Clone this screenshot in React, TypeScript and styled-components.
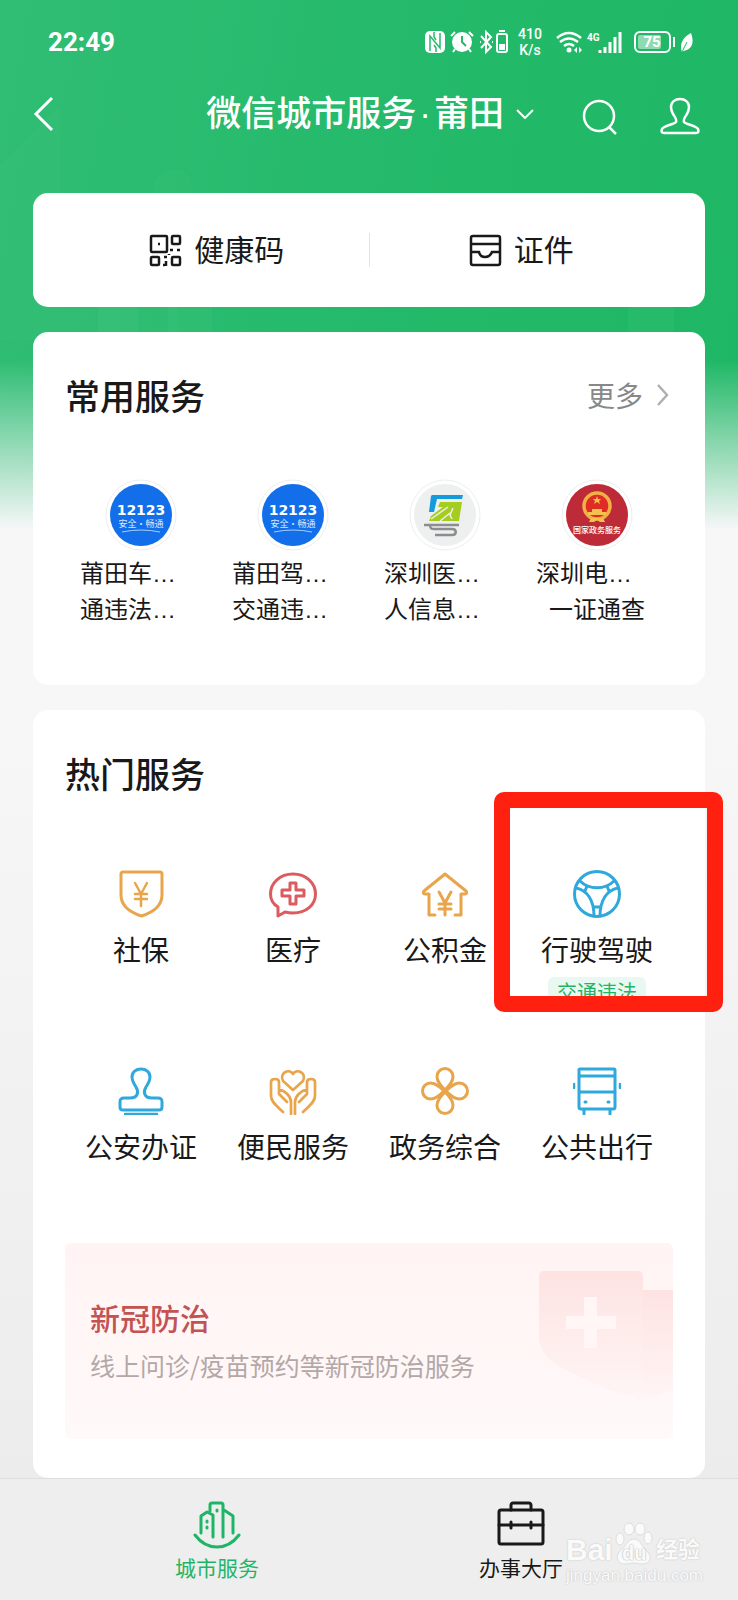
import React from "react";
import styled, { createGlobalStyle } from "styled-components";

const Global = createGlobalStyle`
  *, *::before, *::after { box-sizing: border-box; }
  body {
    margin: 0;
    background: #f1f1f2;
    color: #191919;
    font-family: "Noto Sans CJK SC", sans-serif;
  }
  button, a { font: inherit; color: inherit; text-decoration: none; }
  button { border: 0; padding: 0; background: none; cursor: pointer; }
  svg { display: block; flex: none; }
  h1, h2, h3, p { margin: 0; font-weight: 500; }
`;

const Page = styled.div`
  position: relative;
  display: flex;
  flex-direction: column;
  min-height: 100vh;
  background: linear-gradient(180deg, transparent 0, transparent 360px, #f7f7f8 530px, #f7f7f8 700px, #ececec 1478px),
    linear-gradient(100deg, #30bd74 0%, #22b969 50%, #1cb663 100%);
`;

const Skyline = styled.svg`
  position: absolute;
  left: 0;
  top: 0;
`;

const Header = styled.header`
  position: relative;
  color: #fff;
`;

const StatusBar = styled.div`
  display: flex;
  align-items: center;
  justify-content: space-between;
  height: 84px;
  padding: 0 44px 0 48px;
`;

const Clock = styled.time`
  font: 700 26px/32px Roboto, sans-serif;
`;

const Indicators = styled.div`
  display: flex;
  align-items: center;
  gap: 5px;
`;

const NetSpeed = styled.div`
  display: flex;
  flex-direction: column;
  width: 32px;
  font: 500 14px/16px Roboto, sans-serif;
  text-align: center;
`;

const NavBar = styled.nav`
  display: flex;
  align-items: center;
  height: 60px;
  padding: 0 38px 0 32px;
`;

const CityButton = styled.button`
  display: flex;
  align-items: center;
  gap: 12px;
  margin-left: auto;
`;

const Title = styled.h1`
  padding-bottom: 4px;
  font-size: 35px;
  line-height: 48px;
`;

const Dot = styled.span`
  margin: 0 3px;
  font-family: "Liberation Sans", sans-serif;
`;

const NavActions = styled.div`
  display: flex;
  align-items: center;
  gap: 42px;
  margin-left: 48px;
  padding-top: 4px;
`;

const Main = styled.main`
  position: relative;
  display: flex;
  flex-direction: column;
  flex: 1;
  gap: 25px;
  padding: 49px 33px 0;
`;

const Card = styled.section`
  padding: 0 32px;
  border-radius: 15px;
  background: #fff;
`;

const QuickCard = styled(Card)`
  display: flex;
  align-items: center;
  height: 114px;
`;

const QuickLink = styled.a`
  display: flex;
  flex: 1;
  align-items: center;
  justify-content: center;
  gap: 12px;
  font-size: 30px;
  line-height: 44px;
`;

const QuickText = styled.span`
  padding-bottom: 4px;
`;

const Divider = styled.span`
  width: 1px;
  height: 34px;
  background: #e4e4e4;
`;

const CardHead = styled.div`
  display: flex;
  align-items: center;
  justify-content: space-between;
  height: 126px;
`;

const Heading = styled.h2`
  font-size: 35px;
  line-height: 50px;
`;

const More = styled.a`
  display: flex;
  align-items: center;
  gap: 14px;
  padding-right: 4px;
  color: #888;
  font-size: 28px;
  line-height: 40px;
`;

const Grid = styled.div<{ $row: number }>`
  display: grid;
  grid-template-columns: repeat(4, 1fr);
  grid-auto-rows: ${(p) => p.$row}px;
`;

const FavoriteLink = styled.a`
  display: flex;
  flex-direction: column;
  align-items: center;
  padding-top: 21px;
`;

const FavoriteText = styled.span`
  display: flex;
  flex-direction: column;
  width: 122px;
  margin-top: 4px;
  font-size: 24px;
  line-height: 34px;
`;

const Line = styled.span<{ $center?: boolean }>`
  text-align: ${(p) => (p.$center ? "center" : "left")};
  white-space: nowrap;
`;

const Ellipsis = styled.span`
  font-family: "Liberation Sans", sans-serif;
`;

const ServiceLink = styled.a`
  position: relative;
  display: flex;
  flex-direction: column;
  align-items: center;
  gap: 11px;
  padding-top: 34px;
  font-size: 28px;
  line-height: 40px;
  white-space: nowrap;
`;

const Tag = styled.span`
  position: absolute;
  top: 141px;
  padding: 0 9px;
  border-radius: 6px;
  background: #e9f8f0;
  color: #1fb567;
  font-size: 20px;
  line-height: 30px;
`;

const Highlight = styled.span`
  position: absolute;
  top: -44px;
  right: -50px;
  left: -27px;
  height: 220px;
  border: 16px solid #ff2010;
  border-radius: 10px;
  pointer-events: none;
`;

const HotCard = styled(Card)`
  flex: 1;
  padding-bottom: 38px;
`;

const Banner = styled.a`
  position: relative;
  display: flex;
  flex-direction: column;
  justify-content: center;
  gap: 4px;
  height: 196px;
  margin-top: 13px;
  padding: 0 25px;
  overflow: hidden;
  border-radius: 6px;
  background: linear-gradient(180deg, #fff4f3, #fff9f9);
`;

const BannerArt = styled.svg`
  position: absolute;
  top: 27px;
  right: 0;
`;

const BannerTitle = styled.h3`
  color: #c25352;
  font-size: 30px;
  line-height: 44px;
`;

const BannerText = styled.p`
  color: #b3a8a8;
  font-size: 25px;
  font-weight: 400;
  line-height: 44px;
`;

const TabBar = styled.nav`
  position: relative;
  display: grid;
  grid-template-columns: repeat(2, 1fr);
  height: 122px;
  padding: 0 65px;
  border-top: 1px solid #dedede;
  background: #eee;
`;

const Tab = styled.a<{ $active?: boolean }>`
  display: flex;
  flex-direction: column;
  align-items: center;
  gap: 3px;
  padding-top: 22px;
  color: ${(p) => (p.$active ? "#1fb567" : "#191919")};
  font-size: 21px;
  line-height: 30px;
`;

const Watermark = styled.div`
  position: absolute;
  right: 38px;
  bottom: 14px;
  display: flex;
  flex-direction: column;
  width: 134px;
  color: #fafafa;
  font-family: "Liberation Sans", "Noto Sans CJK SC", sans-serif;
  text-shadow: 0 0 2px #ccc, 0 0 1px #ccc;
`;

const WatermarkLogo = styled.div`
  display: flex;
  align-items: flex-end;
  justify-content: space-between;
  font-size: 30px;
  font-weight: 700;
  line-height: 32px;
`;

const WatermarkCn = styled.span`
  font-size: 22px;
`;

const Paw = styled.span`
  position: relative;
  display: flex;
  justify-content: center;
  width: 38px;
  height: 44px;
`;

const PawText = styled.span`
  position: absolute;
  bottom: 2px;
  font-size: 20px;
  line-height: 22px;
  text-shadow: 0 0 2px #bbb, 0 0 1px #bbb;
`;

const WatermarkUrl = styled.span`
  font-size: 17px;
  line-height: 20px;
`;

const BLUE = "#2fa8dc";
const GOLD = "#e8a54c";

const LineIcon = ({ color, children, w = 3 }: { color: string; children: React.ReactNode; w?: number }) => (
  <svg width="48" height="48" viewBox="0 0 48 48" fill="none" stroke={color} strokeWidth={w} strokeLinecap="round" strokeLinejoin="round" aria-hidden="true">
    {children}
  </svg>
);

const ShieldIcon = () => (
  <LineIcon color={GOLD}>
    <path d="M6 2h37a2 2 0 0 1 2 2v21c0 10-8 17-20.500 21C12 42 4 35 4 25V4a2 2 0 0 1 2-2z" />
    <path d="M18 13l6 11 6-11M24 24v12M18 24h12M18 29h12" strokeWidth="2.500" />
  </LineIcon>
);
const MedicalIcon = () => (
  <LineIcon color="#dc5b5e">
    <path d="M9 37C4 34 1.500 29 1.500 24 1.500 13 11 4 24 4s22.500 9 22.500 20-9.500 19-22.500 19c-3 0-6-.5-8-1l-7 4z" />
    <path d="M21 13h6v7h8v6h-8v8h-6v-8h-8v-6h8z" />
  </LineIcon>
);
const HouseIcon = () => (
  <LineIcon color={GOLD}>
    <path d="M14 45H8V24H4c-2 0-2-2-1-3L24 4l21 17c1 1 1 3-1 3h-4v21h-6" />
    <path d="M18 22l6 11 6-11M24 33v12M18 34h12M18 39h12" />
  </LineIcon>
);
const WheelIcon = () => (
  <LineIcon color={BLUE}>
    <circle cx="24" cy="24" r="22.500" />
    <path d="M7 11c9 9 25 9 34 0M3 18c11 2 18 12 18 28M45 18c-11 2-18 12-18 28M14 16l-2 5M34 16l2 5M21 37h6" />
  </LineIcon>
);
const StampIcon = () => (
  <LineIcon color={BLUE}>
    <path d="M13 31c8 0 9-6 6-11-2-3-4-6-4-10 0-5 4-8 9-8s9 3 9 8c0 4-2 7-4 10-3 5-2 11 6 11h6c3 0 4 1 4 4v5c0 2-1 3-3 3H6c-2 0-3-1-3-3v-5c0-3 1-4 4-4z" />
    <path d="M8 47h32" strokeWidth="2.500" />
  </LineIcon>
);
const HandsIcon = () => (
  <LineIcon color={GOLD} w={2.7}>
    <path d="M24 23L14 14c-4-8 6-13 10-7 4-6 14-1 10 7z" />
    <path d="M22 47V35c0-6-6-11-12-13V15c0-4-8-4-8 0v14c0 6 6 10 12 16M10 22v5l8 8M26 47V35c0-6 6-11 12-13V15c0-4 8-4 8 0v14c0 6-6 10-12 16M38 22v5l-8 8" />
  </LineIcon>
);
const CloverIcon = () => (
  <LineIcon color={GOLD}>
    {[0, 90, 180, 270].map((a) => (
      <path key={a} transform={`rotate(${a} 24 24)`} d="M24 23c-4-4-8-8-8-13.500a8 8 0 0 1 16 0c0 5.500-4 9.500-8 13.500z" />
    ))}
  </LineIcon>
);
const BusIcon = () => (
  <LineIcon color={BLUE}>
    <path d="M7 2h34a1 1 0 0 1 1 1v37a2 2 0 0 1-2 2H8a2 2 0 0 1-2-2V3a1 1 0 0 1 1-1zM6 9h36M6 25h36M11 43v4M37 43v4M12 35h1M35 35h1" />
    <path d="M1 17v4M47 17v4" strokeWidth="2.500" />
  </LineIcon>
);

const CityIcon = () => (
  <LineIcon color="#1fb567">
    <path d="M2 34c12 16 32 16 44 0M8 32V15l6-4 6 3v22M17 10V4c0-2 1-2 2-2h9c2 0 2 1 2 2v32M31 9l9 6v17M14 20v1M14 26v1M24 9v1" />
  </LineIcon>
);
const CaseIcon = () => (
  <LineIcon color="#191919">
    <rect x="2" y="9" width="44" height="34" rx="2" />
    <path d="M14 9V4c0-1 1-2 2-2h16c1 0 2 1 2 2v5M2 24h44M14 21v6M34 21v6" />
  </LineIcon>
);

const TrafficLogo = () => (
  <svg width="72" height="72" viewBox="0 0 72 72" aria-hidden="true">
    <circle cx="36" cy="36" r="35" fill="#fff" stroke="#eee" />
    <circle cx="36" cy="36" r="31" fill="#126fe9" />
    <text x="36" y="36" textAnchor="middle" fill="#fff" fontFamily="DejaVu Sans" fontWeight="700" fontSize="14">12123</text>
    <text x="36" y="48" textAnchor="middle" fill="#d9e9ff" fontFamily="Noto Sans CJK SC" fontSize="9">安全·畅通</text>
    <path d="M17 53q19-4 38 0" fill="none" stroke="#a9cdfb" />
  </svg>
);
const MedicareLogo = () => (
  <svg width="72" height="72" viewBox="0 0 72 72" aria-hidden="true">
    <circle cx="36" cy="36" r="35" fill="#fff" stroke="#eee" />
    <circle cx="36" cy="36" r="31" fill="#eeefef" />
    <path d="M23 16h31l-1 4H28l-3 13h-5l2-16z" fill="#159bdc" />
    <path d="M31 23h22l-3 19H20l2-5 12-9h-5z" fill="#a5cd1f" />
    <path d="M21 42l16-12-4-2 12-2-3 9-3-3-12 10z" fill="#a5cd1f" />
    <path d="M22 40l17-12M44 29l-3 7 2 4M41 34l-10 8" fill="none" stroke="#eeefef" strokeWidth="1.500" />
    <path d="M15 46h35M21 46c0 3 1 4 4 4h18c5 0 5 6 0 6H26" fill="none" stroke="#8b8d8f" strokeWidth="2.500" />
  </svg>
);
const GovLogo = () => (
  <svg width="72" height="72" viewBox="0 0 72 72" aria-hidden="true">
    <circle cx="36" cy="36" r="35" fill="#fff" stroke="#eee" />
    <circle cx="36" cy="36" r="31" fill="#bd2b38" />
    <circle cx="36" cy="27" r="13" fill="#df2c24" stroke="#f0b045" strokeWidth="3.500" />
    <path d="M36 17l1 3h3l-2 2 1 3-3-2-3 2 1-3-2-2h3zM27 33h4v-3h10v3h4v3H27zM30 39h12l2 4h-5l-3-2-3 2h-5z" fill="#f5c04d" />
    <text x="36" y="54" textAnchor="middle" fill="#fff" fontFamily="Noto Sans CJK SC" fontWeight="500" fontSize="8">国家政务服务</text>
  </svg>
);

const favorites = [
  { logo: <TrafficLogo />, a: "莆田车", b: "通违法", cut: true },
  { logo: <TrafficLogo />, a: "莆田驾", b: "交通违", cut: true },
  { logo: <MedicareLogo />, a: "深圳医", b: "人信息", cut: true },
  { logo: <GovLogo />, a: "深圳电", b: "一证通查", cut: false },
];

const services = [
  { icon: <ShieldIcon />, name: "社保" },
  { icon: <MedicalIcon />, name: "医疗" },
  { icon: <HouseIcon />, name: "公积金" },
  { icon: <WheelIcon />, name: "行驶驾驶", tag: "交通违法" },
  { icon: <StampIcon />, name: "公安办证" },
  { icon: <HandsIcon />, name: "便民服务" },
  { icon: <CloverIcon />, name: "政务综合" },
  { icon: <BusIcon />, name: "公共出行" },
];

const StatusIcons = () => (
  <Indicators>
    <svg width="20" height="22" viewBox="0 0 20 22" aria-hidden="true">
      <rect width="20" height="22" rx="5" fill="#fff" />
      <path d="M5 20V5l10 12V2M9 1v5l2 3M11 21v-4l-2-3" fill="none" stroke="#25b96a" strokeWidth="1.500" />
    </svg>
    <svg width="24" height="24" viewBox="0 0 24 24" fill="none" stroke="#fff" strokeWidth="2" aria-hidden="true">
      <circle cx="12" cy="12" r="9" fill="#fff" />
      <path d="M1 6l4-4M23 6l-4-4M5 19l-2 3M19 19l2 3" />
      <path d="M12 6v6l4 4" stroke="#25b96a" />
    </svg>
    <svg width="30" height="24" viewBox="0 0 30 24" fill="none" stroke="#fff" strokeWidth="2" aria-hidden="true">
      <path d="M2 6l10 11-5 5V2l5 5L2 18M1 12h1M13 12h1" />
      <rect x="18" y="4" width="10" height="18" rx="2" />
      <path d="M20 1h6" />
      <path d="M20 14h6v6h-6z" fill="#fff" stroke="none" />
    </svg>
    <NetSpeed><span>410</span><span>K/s</span></NetSpeed>
    <svg width="78" height="24" viewBox="0 0 78 24" fill="none" stroke="#fff" aria-hidden="true">
      <path d="M6 8q12-10 24 0M9 12q9-7 18 0M13 16q5-4 10 0" strokeWidth="2.500" />
      <circle cx="18" cy="20" r="2.500" fill="#fff" stroke="none" />
      <path d="M23 20l3-3v6zM31 20l-3-3v6z" fill="#fff" stroke="none" />
      <text x="36" y="11" fill="#fff" stroke="none" fontFamily="Roboto" fontWeight="700" fontSize="10">4G</text>
      <path d="M49 20v3M54 17v6M59 12v11M64 7v16M69 2v21" strokeWidth="3" />
    </svg>
    <svg width="60" height="24" viewBox="0 0 60 24" aria-hidden="true">
      <rect x="1" y="2" width="35" height="20" rx="5" fill="none" stroke="#fff" strokeWidth="2" />
      <rect x="4" y="5" width="23" height="14" rx="2" fill="#8edbb2" />
      <text x="18" y="17" textAnchor="middle" fill="#fff" fontFamily="Roboto" fontWeight="700" fontSize="15">75</text>
      <path d="M40 7v10" stroke="#fff" strokeWidth="2" />
      <path d="M57 3c3 8 2 14-4 17-3 1-4 1-5 2-3-8 1-15 9-19z" fill="#fff" />
      <path d="M48 22l5-10" stroke="#25b96a" />
    </svg>
  </Indicators>
);

export default function App() {
  return (
    <Page>
      <Global />
      <Skyline width="738" height="340" viewBox="0 0 738 340" aria-hidden="true">
        <path d="M0 165L60 105V340H0z" fill="#fff" opacity=".02" />
        <path d="M60 198h78l40 40v102H60z" fill="#fff" opacity=".02" />
        <path d="M98 290h40v50H98zM168 290h44v50h-44zM628 290h46v50h-46z" fill="#fff" opacity=".03" />
        <circle cx="173" cy="189" r="20" fill="#fff" opacity=".02" />
      </Skyline>
      <Header>
        <StatusBar>
          <Clock>22:49</Clock>
          <StatusIcons />
        </StatusBar>
        <NavBar>
          <button aria-label="返回">
            <svg width="22" height="38" viewBox="0 0 22 38" fill="none" stroke="#fff" strokeWidth="3"><path d="M20 3L4 19l16 16" /></svg>
          </button>
          <CityButton>
            <Title>微信城市服务<Dot>·</Dot>莆田</Title>
            <svg width="18" height="10" viewBox="0 0 18 10" fill="none" stroke="#fff" strokeWidth="2"><path d="M1 1l8 8 8-8" /></svg>
          </CityButton>
          <NavActions>
            <button aria-label="搜索">
              <svg width="36" height="38" viewBox="0 0 36 38" fill="none" stroke="#fff" strokeWidth="2.500"><circle cx="17" cy="19" r="15" /><path d="M27 30l7 7" /></svg>
            </button>
            <button aria-label="我的">
              <svg width="40" height="38" viewBox="0 0 40 38" fill="none" stroke="#fff" strokeWidth="2.500" strokeLinejoin="round">
                <path d="M16 25c1-3-1-5-3-8-1-2-2-4-2-7 0-5 4-8 9-8s9 3 9 8c0 3-1 5-2 7-2 3-4 5-3 8 1 2 13 4 14 7 1 3 0 4-2 4H4c-2 0-3-1-2-4 1-3 13-5 14-7z" />
              </svg>
            </button>
          </NavActions>
        </NavBar>
      </Header>
      <Main>
        <QuickCard>
          <QuickLink href="#code">
            <svg width="33" height="33" viewBox="0 0 33 33" fill="none" stroke="#191919" strokeWidth="2.500" aria-hidden="true">
              <rect x="2" y="2" width="16" height="16" rx="1" /><rect x="23" y="2" width="8" height="8" rx="1" />
              <rect x="2" y="23" width="8" height="8" rx="1" /><rect x="23" y="23" width="8" height="8" rx="1" />
              <path d="M9 10h2M21 16h3M28 16h3M15 23h3M20 21v-1M17 27v5M14 31h2" />
            </svg>
            <QuickText>健康码</QuickText>
          </QuickLink>
          <Divider />
          <QuickLink href="#cards">
            <svg width="33" height="33" viewBox="0 0 33 33" fill="none" stroke="#191919" strokeWidth="2.500" aria-hidden="true">
              <rect x="2" y="2" width="29" height="29" rx="2" />
              <path d="M2 10h29M2 18h8q1 5 6 5t7-5h8" />
            </svg>
            <QuickText>证件</QuickText>
          </QuickLink>
        </QuickCard>

        <Card>
          <CardHead>
            <Heading>常用服务</Heading>
            <More href="#more">
              更多
              <svg width="12" height="22" viewBox="0 0 12 22" fill="none" stroke="#b0b0b0" strokeWidth="2.500"><path d="M1 1l9 10-9 10" /></svg>
            </More>
          </CardHead>
          <Grid $row={227}>
            {favorites.map((f, i) => (
              <FavoriteLink href="#service" key={i}>
                {f.logo}
                <FavoriteText>
                  <Line>{f.a}<Ellipsis>…</Ellipsis></Line>
                  <Line $center={!f.cut}>{f.b}{f.cut && <Ellipsis>…</Ellipsis>}</Line>
                </FavoriteText>
              </FavoriteLink>
            ))}
          </Grid>
        </Card>

        <HotCard>
          <CardHead>
            <Heading>热门服务</Heading>
          </CardHead>
          <Grid $row={197}>
            {services.map((s) => (
              <ServiceLink href="#service" key={s.name}>
                {s.icon}
                {s.name}
                {s.tag && <Tag>{s.tag}</Tag>}
                {s.tag && <Highlight />}
              </ServiceLink>
            ))}
          </Grid>
          <Banner href="#covid">
            <BannerTitle>新冠防治</BannerTitle>
            <BannerText>线上问诊/疫苗预约等新冠防治服务</BannerText>
            <BannerArt width="135" height="136" viewBox="0 0 135 136" aria-hidden="true">
              <defs>
                <linearGradient id="shield" x1="0" y1="0" x2="0" y2="1">
                  <stop offset="0" stopColor="#fde3e2" />
                  <stop offset="1" stopColor="#fff5f5" />
                </linearGradient>
              </defs>
              <path d="M100 20h35v100q-20 8-35 10z" fill="url(#shield)" />
              <path d="M6 1h94q5 0 5 5v122Q75 124 40 106 1 90 1 68V6q0-5 5-5z" fill="url(#shield)" />
              <path d="M46 27h13v19h19v13H59v19H46V59H28V46h18z" fill="#fff6f5" />
            </BannerArt>
          </Banner>
        </HotCard>
      </Main>
      <TabBar>
        <Tab href="#city" $active><CityIcon />城市服务</Tab>
        <Tab href="#hall"><CaseIcon />办事大厅</Tab>
        <Watermark>
          <WatermarkLogo>
            <span>Bai</span>
            <Paw>
              <svg width="38" height="44" viewBox="0 0 38 44" fill="#fafafa" stroke="#ddd" aria-hidden="true">
                <ellipse cx="5" cy="17" rx="4" ry="6" /><ellipse cx="14" cy="7" rx="5" ry="6" />
                <ellipse cx="25" cy="7" rx="5" ry="6" /><ellipse cx="33" cy="16" rx="4" ry="6" />
                <path d="M19 17c6 0 7 6 11 10 8 7 6 15-3 15-4 0-5-1-8-1s-5 1-9 1c-8 0-11-8-3-15 5-4 6-10 12-10z" />
              </svg>
              <PawText>du</PawText>
            </Paw>
            <WatermarkCn>经验</WatermarkCn>
          </WatermarkLogo>
          <WatermarkUrl>jingyan.baidu.com</WatermarkUrl>
        </Watermark>
      </TabBar>
    </Page>
  );
}
